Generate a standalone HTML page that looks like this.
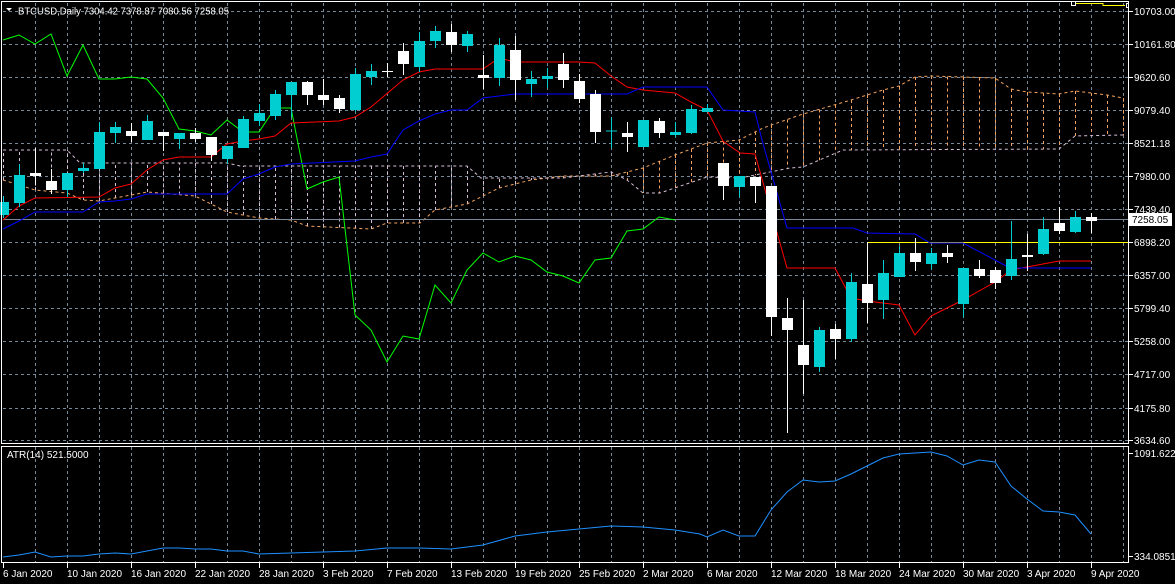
<!DOCTYPE html>
<html><head><meta charset="utf-8"><style>
html,body{margin:0;padding:0;background:#000;width:1175px;height:584px;overflow:hidden}
svg{display:block}
text{font-family:"Liberation Sans",sans-serif;font-size:10px;fill:#fff}
</style></head><body>
<svg id="s" width="1175" height="584" xmlns="http://www.w3.org/2000/svg">
<rect width="1175" height="584" fill="#000"/>
<g id="grid"></g>
<g id="cloud"></g>
<g id="lines"></g>
<g id="candles"></g>
<g id="fr"></g>
<text x="18" y="14.5" textLength="211" lengthAdjust="spacingAndGlyphs">BTCUSD,Daily  7304.42 7378.87 7080.56 7258.05</text>
<polygon points="6,8 12,8 9,11" fill="#fff"/>
<text x="7" y="458">ATR(14) 521.5000</text>
</svg>
<script>
const NS="http://www.w3.org/2000/svg";
function el(p,t,a){const e=document.createElementNS(NS,t);for(const k in a)e.setAttribute(k,a[k]);document.getElementById(p).appendChild(e);return e;}
function pl(p,pts,c,extra){el(p,'polyline',Object.assign({points:pts.map(q=>q.join(',')).join(' '),fill:'none',stroke:c,'stroke-width':1},extra||{}));}
const G='#778899';
for(let x=35;x<=1123;x+=32){el('grid','line',{x1:x+.5,y1:3,x2:x+.5,y2:443,stroke:G,'stroke-dasharray':'3,3'});el('grid','line',{x1:x+.5,y1:447,x2:x+.5,y2:563,stroke:G,'stroke-dasharray':'3,3'});}
const hl=[[11,'10703.00'],[44,'10161.80'],[77,'9620.60'],[110,'9079.40'],[143,'8521.18'],[176,'7980.00'],[209,'7439.40'],[242,'6898.20'],[275,'6357.00'],[308,'5799.40'],[341,'5258.00'],[374,'4717.00'],[408,'4175.80'],[440,'3634.60']];
hl.forEach(([y,t])=>{el('grid','line',{x1:3,y1:y+.5,x2:1128,y2:y+.5,stroke:G,'stroke-dasharray':'3,3'});el('fr','line',{x1:1129,y1:y+.5,x2:1133,y2:y+.5,stroke:'#fff'});const e=el('fr','text',{x:1134,y:y+4});e.textContent=t;});
[[453,'1091.6221'],[556,'334.0851']].forEach(([y,t])=>{el('fr','line',{x1:1129,y1:y+.5,x2:1133,y2:y+.5,stroke:'#fff'});const e=el('fr','text',{x:1134,y:y+4});e.textContent=t;});
const d=['6 Jan 2020','10 Jan 2020','16 Jan 2020','22 Jan 2020','28 Jan 2020','3 Feb 2020','7 Feb 2020','13 Feb 2020','19 Feb 2020','25 Feb 2020','2 Mar 2020','6 Mar 2020','12 Mar 2020','18 Mar 2020','24 Mar 2020','30 Mar 2020','3 Apr 2020','9 Apr 2020'];
d.forEach((t,i)=>{const x=3+64*i;el('fr','line',{x1:x+.5,y1:563,x2:x+.5,y2:568,stroke:'#fff'});const e=el('fr','text',{x:x,y:577});e.textContent=t;});
const A=[[3,180],[35,190],[67,193],[83,200],[99,201],[147,192],[195,196],[227,212],[259,218],[291,220],[307,226],[371,229],[387,223],[420,223],[435,210],[467,204],[499,188],[531,180],[563,176],[611,176],[643,168],[675,155],[707,143],[739,140],[763,128],[800,115],[851,100],[883,90],[899,86],[915,77],[931,76],[995,78],[1011,89],[1027,92],[1059,94],[1075,91],[1091,93],[1107,95],[1123,98]];
const B=[[3,150],[67,150],[80,163],[227,163],[240,166],[467,166],[481,178],[563,178],[611,172],[627,180],[643,193],[660,193],[707,177],[740,178],[790,168],[803,167],[843,150],[1059,149],[1075,136],[1123,135]];
function it(P,x){for(let i=0;i<P.length-1;i++){if(x>=P[i][0]&&x<=P[i+1][0]){const t=(x-P[i][0])/(P[i+1][0]-P[i][0]);return P[i][1]+t*(P[i+1][1]-P[i][1]);}}return P[P.length-1][1];}
const SA='#f4a460',SB='#d8bfd8';
for(let x=3;x<=1123;x+=16){const a=it(A,x),b=it(B,x);el('cloud','line',{x1:x+.5,y1:a,x2:x+.5,y2:b,stroke:a<b?SA:SB,'stroke-dasharray':'3,3'});}
pl('cloud',A,SA,{'stroke-dasharray':'3,3'});pl('cloud',B,SB,{'stroke-dasharray':'3,3'});
el('lines','line',{x1:3,y1:219.5,x2:1128,y2:219.5,stroke:G});
el('lines','line',{x1:867,y1:242.5,x2:1128,y2:242.5,stroke:'#ff0'});
el('lines','line',{x1:867.5,y1:242,x2:867.5,y2:322,stroke:'#fff'});
pl('lines',[[3,40],[19,35],[35,44],[51,34],[67,76],[83,45],[99,79],[115,79],[131,77],[147,79],[163,98],[179,129],[195,131],[211,135],[227,120],[243,132],[259,132],[275,108],[291,108],[307,189],[323,182],[339,177],[355,315],[371,330],[387,362],[403,336],[419,339],[435,285],[451,303],[467,270],[483,253],[499,262],[515,256],[531,260],[547,272],[563,276],[579,283],[595,260],[611,258],[627,231],[643,229],[659,217],[675,220]],'#0f0');
pl('lines',[[3,220],[19,206],[35,198],[99,197],[115,188],[131,184],[147,170],[163,160],[179,157],[211,157],[227,144],[243,141],[259,139],[275,136],[291,123],[339,121],[355,117],[371,107],[403,80],[419,72],[435,69],[483,69],[499,58],[515,62],[579,62],[595,63],[611,76],[627,87],[643,90],[675,93],[691,102],[707,110],[723,141],[740,153],[755,154],[787,268],[835,268],[851,298],[867,301],[899,305],[915,335],[931,316],[963,300],[995,282],[1011,270],[1027,267],[1059,261],[1091,261]],'#f00');
pl('lines',[[3,229],[19,221],[35,212],[83,212],[99,202],[115,201],[131,199],[147,194],[227,194],[243,179],[259,174],[275,167],[291,164],[355,161],[371,157],[387,154],[403,130],[419,121],[435,114],[451,110],[467,110],[483,98],[499,96],[515,94],[627,94],[643,87],[707,87],[723,110],[755,112],[762,140],[787,228],[853,228],[867,233],[915,234],[930,243],[963,243],[1010,268],[1091,268]],'#00f');
const C=[[3,202,215,196,218,1],[19,175,203,164,207,1],[35,173,176,148,185,0],[51,181,190,169,194,0],[67,173,190,173,197,1],[83,168,171,163,173,1],[99,132,169,122,169,1],[115,127,133,122,143,1],[131,131,136,123,142,0],[147,121,140,115,140,1],[163,132,136,132,151,0],[179,133,139,133,149,1],[195,133,139,128,142,0],[211,137,155,137,161,0],[227,146,159,146,164,1],[243,119,148,116,148,1],[259,113,121,104,126,1],[275,94,116,90,120,1],[291,82,95,82,117,1],[307,82,95,81,105,0],[323,95,100,79,105,0],[339,98,109,95,113,0],[355,74,110,68,112,1],[371,71,77,64,85,1],[387,71,72,63,77,0],[403,51,64,43,75,0],[419,41,67,32,72,1],[435,31,41,26,48,1],[451,32,45,24,52,0],[467,34,46,31,52,1],[483,75,78,55,89,0],[499,45,78,38,86,1],[515,50,80,36,100,0],[531,79,84,71,97,1],[547,76,79,68,88,1],[563,64,80,53,88,0],[579,81,99,74,103,0],[595,94,132,90,143,0],[611,130.5,131.5,117,148,1],[627,133,137,122,152,0],[643,120,147,120,147,1],[659,121,133,118,138,0],[675,132,135,122,137,1],[691,109,133,105,134,1],[707,108,112,104,112,1],[723,163,186,163,200,0],[739,176,187,176,197,1],[755,177,186,177,203,0],[771,186,317,186,336,0],[787,318,330,298,433,0],[803,345,365,300,394,0],[819,330,367,327,372,1],[835,329,339,324,359,0],[851,282,339,273,342,1],[867,284,303,242,323,0],[883,273,300,260,319,1],[899,253,277,246,277,1],[915,253,262,238,271,0],[931,253,264,248,269,1],[947,253,257,245,263,0],[963,268,304,268,317,1],[979,269,276,260,278,0],[995,270,283,267,289,0],[1011,259,276,221,280,1],[1027,255,257,234,271,0],[1043,229,254,217,255,1],[1059,223,231,207,234,0],[1075,217,232,211,233,1],[1091,217,221,213,233,0]];
C.forEach(([x,t,b,h,l,c])=>{const col=c?'#00ced1':'#fff';el('candles','line',{x1:x+.5,y1:h,x2:x+.5,y2:l,stroke:col});el('candles','rect',{x:x-5,y:t,width:11,height:Math.max(1,b-t),fill:col});});
pl('lines',[[3,557],[19,555],[35,552],[51,557],[67,556],[83,556],[99,554],[115,553],[131,554],[147,551],[163,548],[179,548],[195,549],[211,549],[227,551],[243,551],[259,554],[291,553],[323,552],[355,551],[387,548],[419,548],[451,549],[483,545],[515,536],[547,532],[579,529],[611,526],[643,527],[675,530],[700,534],[707,537],[723,530],[739,536],[755,536],[771,510],[787,492],[803,480],[819,482],[835,481],[851,474],[867,466],[883,458],[899,454],[915,453],[931,452],[947,456],[963,465],[979,460],[995,462],[1011,486],[1027,499],[1043,511],[1059,512],[1075,515],[1091,534]],'#1e90ff');
el('fr','rect',{x:1.5,y:1.5,width:1127,height:442,fill:'none',stroke:'#fff'});
el('fr','rect',{x:1.5,y:446.5,width:1127,height:116,fill:'none',stroke:'#fff'});
el('fr','rect',{x:1071.5,y:1.5,width:4,height:4,fill:'none',stroke:'#fff'});
pl('fr',[[1076,3.5],[1103,3.5],[1103,5.5],[1125,5.5]],'#ff0');
el('fr','rect',{x:1126.5,y:3.5,width:2,height:4,fill:'none',stroke:'#fff'});
el('fr','rect',{x:1129,y:213,width:43,height:13,fill:'#fff'});
const pt=el('fr','text',{x:1132,y:223});pt.textContent='7258.05';pt.setAttribute('style','fill:#000');
</script>
</body></html>
